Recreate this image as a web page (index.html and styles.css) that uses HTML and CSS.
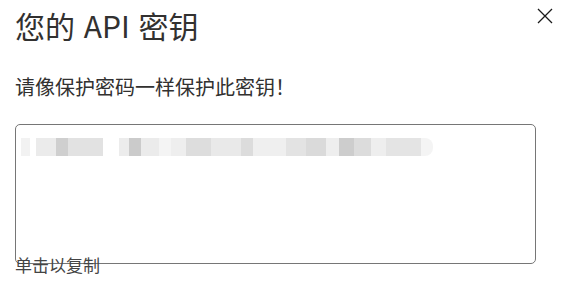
FILE: index.html
```html
<!DOCTYPE html>
<html lang="zh-CN">
<head>
<meta charset="utf-8">
<title>您的 API 密钥</title>
<link rel="stylesheet" href="styles.css">
</head>
<body>
<div class="dialog">
  <div class="header">
    <h1 class="title">您的 API 密钥</h1>
    <button class="close" aria-label="关闭">
      <svg width="16" height="16" viewBox="0 0 16 16"><path d="M1 1 L15 15 M15 1 L1 15" stroke="#1b1b1b" stroke-width="1.3" fill="none"/></svg>
    </button>
  </div>
  <p class="subtitle">请像保护密码一样保护此密钥！</p>
  <div class="keybox">
    <div class="mosaic"></div>
  </div>
  <div class="caption">单击以复制</div>
</div>
</body>
</html>
```
FILE: styles.css
```css
body {
  margin: 0;
  background: #ffffff;
  font-family: "Noto Sans CJK SC", "Noto Sans", sans-serif;
  color: #323130;
}
.dialog {
  padding: 0 8px 0 15px;
}
.header {
  display: flex;
  justify-content: space-between;
  align-items: flex-start;
}
.title {
  margin: 0;
  padding-top: 7px;
  font-size: 30px;
  line-height: 36px;
  font-weight: 400;
  word-spacing: 2px;
}
.close {
  margin-top: 8px;
  padding: 0;
  border: 0;
  background: transparent;
  width: 16px;
  height: 16px;
  display: flex;
}
.subtitle {
  margin: 31px 0 0;
  font-size: 20px;
  line-height: 26px;
}
.keybox {
  margin-top: 24px;
  width: 519px;
  height: 125px;
  border: 1px solid #767676;
  border-radius: 5px;
  padding-top: 13px;
  box-sizing: content-box;
}
.mosaic {
  margin-left: 5px;
  width: 412px;
  height: 18px;
  background: linear-gradient(to right,
    #f2f2f2 0 9px, #fff 9px 15px,
    #ebebeb 15px 35px, #cfcfcf 35px 47px, #e2e2e2 47px 82px,
    #fff 82px 98px, #ececec 98px 108px, #cbcbcb 108px 120px, #ebebeb 120px 138px,
    #f4f4f4 138px 150px, #eeeeee 150px 165px, #dddddd 165px 190px,
    #e9e9e9 190px 220px, #dcdcdc 220px 232px, #efefef 232px 265px,
    #e3e3e3 265px 285px, #dadada 285px 305px, #eeeeee 305px 318px,
    #cdcdcd 318px 333px, #dcdcdc 333px 350px, #eeeeee 350px 365px,
    #e4e4e4 365px 400px, #f4f4f4 400px 412px);
  border-radius: 0 8px 8px 0;
}
.caption {
  position: relative;
  margin-top: -9px;
  font-size: 17px;
  line-height: 20px;
  color: #444444;
}
```
